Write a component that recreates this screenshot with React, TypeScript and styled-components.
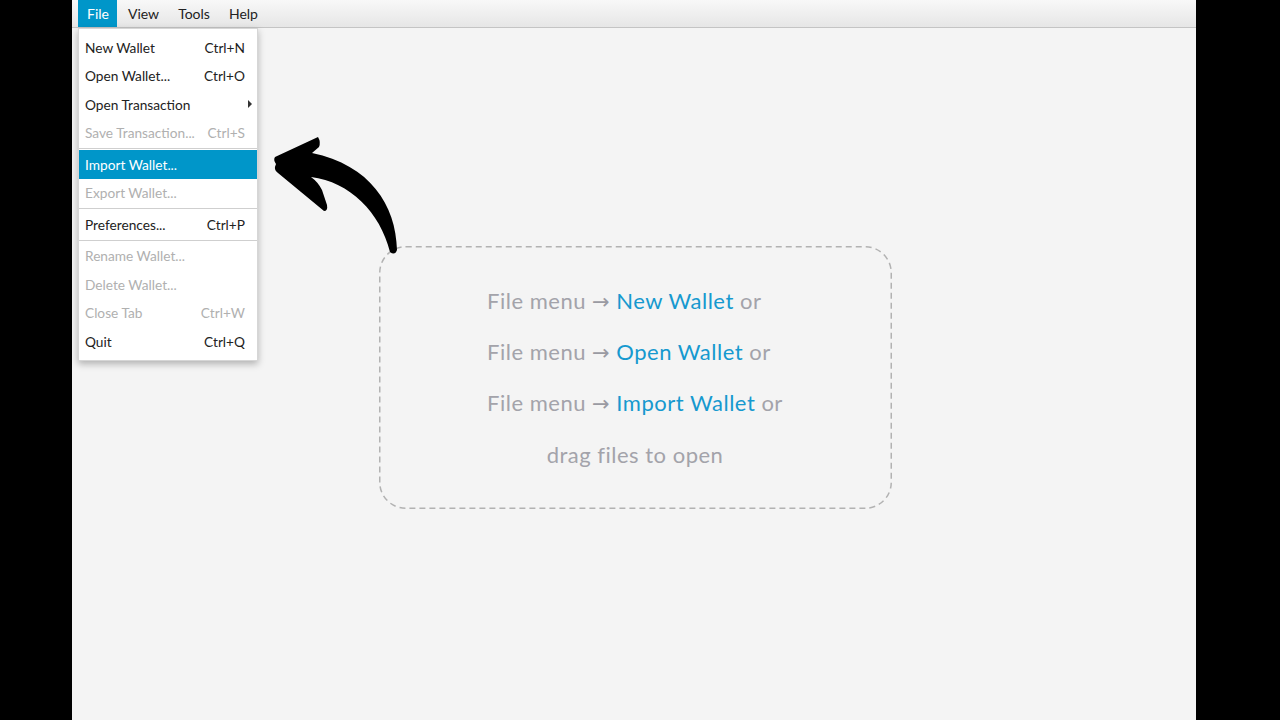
import React from 'react';
import styled, { createGlobalStyle } from 'styled-components';

const GlobalStyle = createGlobalStyle`
  html, body {
    margin: 0;
    padding: 0;
    background: #000;
  }
  body {
    font-family: Lato, 'Noto Sans', sans-serif;
  }
`;

const BLUE = '#0096c9';

interface MenuEntry {
  label: string;
  shortcut?: string;
  disabled?: boolean;
  active?: boolean;
  submenu?: boolean;
  separator?: boolean;
}

const fileMenu: MenuEntry[] = [
  { label: 'New Wallet', shortcut: 'Ctrl+N' },
  { label: 'Open Wallet...', shortcut: 'Ctrl+O' },
  { label: 'Open Transaction', submenu: true },
  { label: 'Save Transaction...', shortcut: 'Ctrl+S', disabled: true },
  { label: '', separator: true },
  { label: 'Import Wallet...', active: true },
  { label: 'Export Wallet...', disabled: true },
  { label: '', separator: true },
  { label: 'Preferences...', shortcut: 'Ctrl+P' },
  { label: '', separator: true },
  { label: 'Rename Wallet...', disabled: true },
  { label: 'Delete Wallet...', disabled: true },
  { label: 'Close Tab', shortcut: 'Ctrl+W', disabled: true },
  { label: 'Quit', shortcut: 'Ctrl+Q' },
];

const hints = ['New Wallet', 'Open Wallet', 'Import Wallet'];

const Screen = styled.div`
  width: 1280px;
  height: 720px;
  display: flex;
  padding-left: 72px;
  box-sizing: border-box;
  background: #000;
  overflow: hidden;
`;

const Window = styled.div`
  width: 1124px;
  height: 720px;
  background: #f4f4f4;
  display: flex;
  flex-direction: column;
  position: relative;
`;

const MenuBar = styled.div`
  height: 27px;
  display: flex;
  align-items: stretch;
  gap: 2px;
  padding-left: 6px;
  background: linear-gradient(#f8f8f8, #e6e6e6);
  border-bottom: 1px solid #c4c4c4;
  flex-shrink: 0;
`;

const MenuTitle = styled.div<{ $open?: boolean }>`
  display: flex;
  align-items: center;
  padding: 0 8px 0 9px;
  font-size: 14px;
  color: ${(p) => (p.$open ? '#fff' : '#222')};
  background: ${(p) => (p.$open ? BLUE : 'transparent')};
`;

const Dropdown = styled.div`
  position: absolute;
  top: 28px;
  left: 6px;
  width: 180px;
  padding: 4px 0 4px;
  background: #fff;
  border: 1px solid #d6d6d6;
  box-sizing: border-box;
  box-shadow: 0 3px 7px rgba(0, 0, 0, 0.28);
  z-index: 2;
`;

const Item = styled.div<{ $active?: boolean; $disabled?: boolean }>`
  height: 28.5px;
  display: flex;
  align-items: center;
  justify-content: space-between;
  padding: 0 12px 0 6px;
  font-size: 13.7px;
  color: ${(p) => (p.$active ? '#fff' : p.$disabled ? '#b0b0b0' : '#222')};
  background: ${(p) => (p.$active ? BLUE : 'transparent')};
`;

const Shortcut = styled.span`
  margin-left: 10px;
`;

const SubArrow = styled.span`
  width: 0;
  height: 0;
  margin-right: -7px;
  border-top: 4px solid transparent;
  border-bottom: 4px solid transparent;
  border-left: 4px solid #333;
`;

const Separator = styled.div`
  height: 3px;
  display: flex;
  align-items: center;
  &::after {
    content: '';
    flex: 1;
    height: 1px;
    background: #cfcfcf;
  }
`;

const Body = styled.div`
  flex: 1;
  display: flex;
  justify-content: center;
  padding-top: 218px;
`;

const DropZone = styled.div`
  position: relative;
  width: 513px;
  height: 263px;
  box-sizing: border-box;
  margin-left: 2px;
  display: flex;
  flex-direction: column;
  align-items: center;
  justify-content: center;
  gap: 20.8px;
  padding-top: 1px;
  font-size: 22px;
  letter-spacing: 0.5px;
  color: #a3a3aa;
`;

const HintGroup = styled.div`
  display: flex;
  flex-direction: column;
  align-items: flex-start;
  gap: 20.8px;
`;

const DashedFrame = styled.svg`
  position: absolute;
  inset: 0;
  width: 100%;
  height: 100%;
  pointer-events: none;
`;

const HintLine = styled.div`
  height: 30.5px;
  line-height: 30.5px;
  white-space: nowrap;
`;

const Arrow = styled.span`
  font-family: 'DejaVu Sans', sans-serif;
  font-size: 21px;
  line-height: 1;
  color: #9a9aa2;
`;

const Action = styled.span`
  color: #1699cf;
`;

const ArrowSvg = styled.svg`
  position: absolute;
  left: 196px;
  top: 128px;
  z-index: 1;
`;

function CurvedArrow() {
  return (
    <ArrowSvg width="140" height="130" viewBox="268 128 140 130">
      <path
        d="M 275 157 Q 273 160 276 164 Q 273 170 278 173 L 324 211 Q 328 211 327 205 L 322 190 Q 318 182 311 177 C 350 182 380 212 390 252 Q 395 256 397 250 C 396 205 370 165 312 153 L 319 147 Q 321 142 318 137 Z"
        fill="#000"
      />
    </ArrowSvg>
  );
}

export default function App() {
  return (
    <>
      <GlobalStyle />
      <Screen>
        <Window>
          <MenuBar>
            <MenuTitle $open>File</MenuTitle>
            <MenuTitle>View</MenuTitle>
            <MenuTitle>Tools</MenuTitle>
            <MenuTitle>Help</MenuTitle>
          </MenuBar>
          <Dropdown>
            {fileMenu.map((entry, i) =>
              entry.separator ? (
                <Separator key={i} />
              ) : (
                <Item key={i} $active={entry.active} $disabled={entry.disabled}>
                  <span>{entry.label}</span>
                  {entry.shortcut && <Shortcut>{entry.shortcut}</Shortcut>}
                  {entry.submenu && <SubArrow />}
                </Item>
              )
            )}
          </Dropdown>
          <CurvedArrow />
          <Body>
            <DropZone>
              <DashedFrame>
                <rect
                  x="0.75"
                  y="0.75"
                  width="511.5"
                  height="261.5"
                  rx="26"
                  fill="none"
                  stroke="#b2b2b2"
                  strokeWidth="1.5"
                  strokeDasharray="6 4"
                />
              </DashedFrame>
              <HintGroup>
                {hints.map((action) => (
                  <HintLine key={action}>
                    File menu <Arrow>→</Arrow> <Action>{action}</Action> or
                  </HintLine>
                ))}
              </HintGroup>
              <HintLine>drag files to open</HintLine>
            </DropZone>
          </Body>
        </Window>
      </Screen>
    </>
  );
}
